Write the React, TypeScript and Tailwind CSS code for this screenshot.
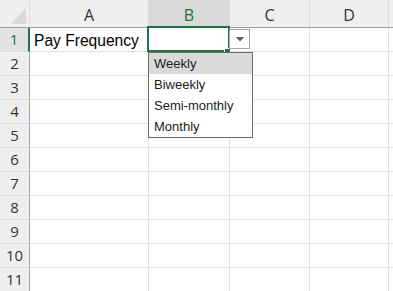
import React from 'react';

const COLS = [
  { key: 'A', w: 'w-[119px]' },
  { key: 'B', w: 'w-[81px]' },
  { key: 'C', w: 'w-[80px]' },
  { key: 'D', w: 'w-[79px]' },
];

const OPTIONS = ['Weekly', 'Biweekly', 'Semi-monthly', 'Monthly'];

const HEADER_FONT = { fontFamily: '"Open Sans", "Noto Sans", sans-serif' };

const DropdownList: React.FC = () => (
  <div className="absolute left-[-1px] top-[24px] z-20 w-[105px] border border-[#6b6b6b] bg-white py-0">
    {OPTIONS.map((opt, i) => (
      <div
        key={opt}
        className={`flex h-[21px] items-center pl-[5px] text-[13px] text-[#1a1a1a] ${i === 0 ? 'bg-[#d9d9d9]' : ''}`}
        style={{ fontFamily: '"Liberation Sans", Arial, sans-serif' }}
      >
        {opt}
      </div>
    ))}
  </div>
);

const SelectedCell: React.FC = () => (
  <>
    {/* selection border */}
    <div className="pointer-events-none absolute left-[-2px] top-[-2px] z-10 h-[26px] w-[83px] border-2 border-[#217346]" />
    <div className="absolute left-[76px] top-[21px] z-10 h-[5px] w-[5px] bg-[#217346] outline outline-1 outline-white" />
    {/* dropdown arrow button */}
    <div className="absolute left-[80px] top-[1px] z-10 flex h-[20px] w-[21px] items-center justify-center border border-[#a6a6a6] bg-white">
      <svg width="8" height="5" viewBox="0 0 8 5">
        <path d="M0 0h8L4 4.5z" fill="#5a5a5a" />
      </svg>
    </div>
    <DropdownList />
  </>
);

export default function App() {
  const rows = Array.from({ length: 11 }, (_, i) => i + 1);

  return (
    <div className="h-[291px] w-[393px] overflow-hidden bg-white">
      {/* column headers */}
      <div className="flex h-[28px] border-b border-[#9f9f9f] bg-[#efefef]">
        <div className="relative flex w-[30px] shrink-0 items-end justify-end border-r border-[#dcdcdc]">
          <svg width="15" height="16" viewBox="0 0 15 16" className="mb-[3px] mr-[3px]">
            <path d="M15 0V16H0z" fill="#dadada" />
          </svg>
        </div>
        {COLS.map((c) => (
          <div
            key={c.key}
            className={`flex ${c.w} shrink-0 items-center justify-center border-r border-[#dcdcdc] pt-[2px] text-[16px] ${c.key === 'B' ? 'bg-[#d9d9d9] text-[#217346]' : 'text-[#333]'}`}
            style={HEADER_FONT}
          >
            {c.key}
          </div>
        ))}
        <div className="flex-1" />
      </div>

      {rows.map((r) => (
        <div key={r} className="flex h-[24px]">
          <div
            className={`flex w-[30px] shrink-0 items-center justify-center border-b text-[15px] ${r === 1 ? 'border-r-2 border-r-[#217346] border-b-[#dcdcdc] bg-[#e2e2e2] text-[#217346]' : 'border-r border-r-[#a8a8a8] border-b-[#dcdcdc] bg-[#efefef] text-[#333]'}`}
            style={HEADER_FONT}
          >
            {r}
          </div>
          {COLS.map((c) => (
            <div
              key={c.key}
              className={`relative ${c.w} shrink-0 border-b border-r border-[#e1e1e1]`}
            >
              {r === 1 && c.key === 'A' && (
                <span
                  className="absolute left-[4px] top-[1px] whitespace-nowrap text-[15.6px] text-black"
                  style={{ fontFamily: '"Liberation Sans", Arial, sans-serif' }}
                >
                  Pay Frequency
                </span>
              )}
              {r === 1 && c.key === 'B' && <SelectedCell />}
            </div>
          ))}
          <div className="flex-1 border-b border-[#e1e1e1]" />
        </div>
      ))}
    </div>
  );
}
